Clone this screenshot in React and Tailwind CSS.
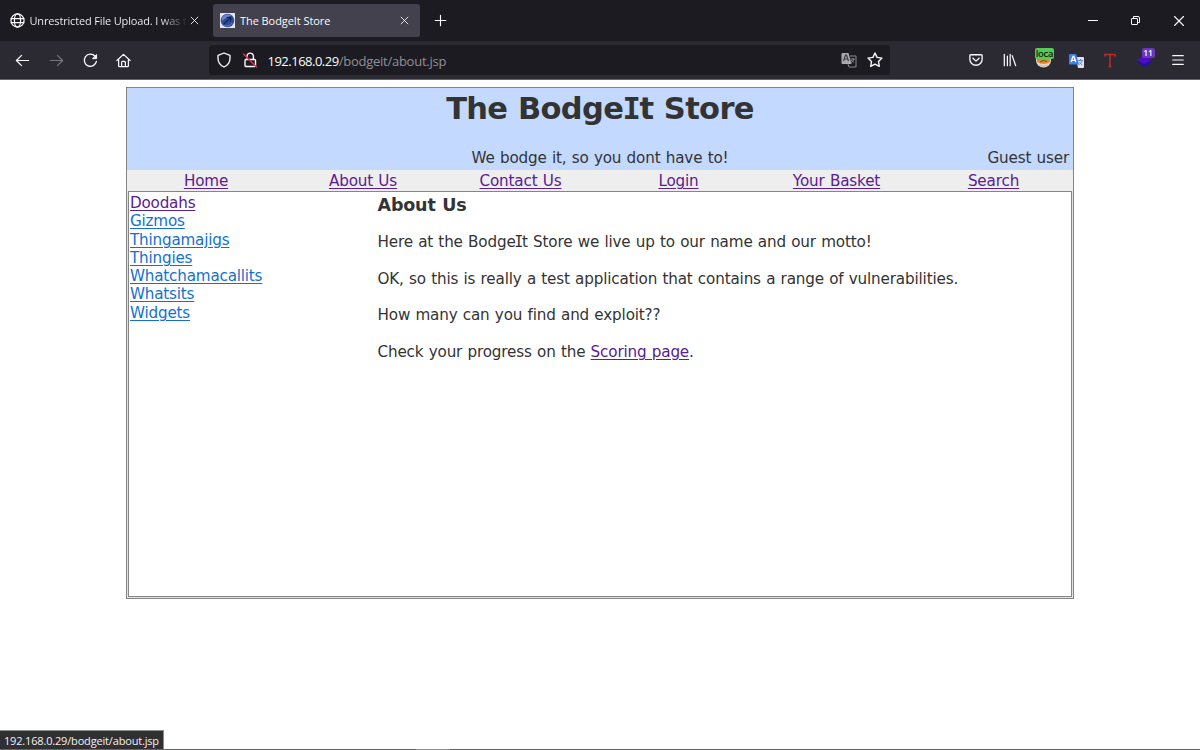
const navLinks = [
  { label: 'Home', width: 'w-[157px]' },
  { label: 'About Us', width: 'w-[157px]' },
  { label: 'Contact Us', width: 'w-[158px]' },
  { label: 'Login', width: 'w-[158px]' },
  { label: 'Your Basket', width: 'w-[158px]' },
  { label: 'Search', width: 'w-[156px]' },
];

const categories = [
  { label: 'Doodahs', visited: true },
  { label: 'Gizmos' },
  { label: 'Thingamajigs' },
  { label: 'Thingies' },
  { label: 'Whatchamacallits' },
  { label: 'Whatsits' },
  { label: 'Widgets' },
];

const iconProps = {
  viewBox: '0 0 16 16',
  fill: 'none',
  stroke: 'currentColor',
  strokeLinecap: 'round',
  strokeLinejoin: 'round',
};

function CloseIcon({ className }) {
  return (
    <svg {...iconProps} strokeWidth="1.5" className={className}>
      <path d="M2 2l12 12M14 2L2 14" />
    </svg>
  );
}

function GlobeIcon() {
  return (
    <svg {...iconProps} strokeWidth="1.3" className="size-[15px] shrink-0">
      <circle cx="8" cy="8" r="7" />
      <ellipse cx="8" cy="8" rx="3.3" ry="7" />
      <path d="M1.2 6h13.6M1.2 10.3h13.6" />
    </svg>
  );
}

function StoreFavicon() {
  return (
    <svg viewBox="0 0 15 15" className="size-[15px] shrink-0">
      <path fill="#e4e6ea" d="M0 0h15v15H0z" />
      <circle cx="7.5" cy="7.5" r="6.8" fill="#314c9c" />
      <path d="M2 5a6 6 0 0 1 10-1.5C8 3.5 5 5 2 8z" fill="#7089c4" />
      <path d="M3.5 11.5L11 4M6.5 4.5L11 4l-.5 4.500" stroke="#142457" strokeWidth="1.2" fill="none" />
      <path d="M3 12c3 1.500 7 1 9-2" stroke="#5978c9" fill="none" />
    </svg>
  );
}

function TabStrip() {
  return (
    <div className="flex h-[41px] items-center bg-[#1c1b21] text-[#fbfbfe]">
      <div className="flex w-[213px] items-center pl-[10px]">
        <GlobeIcon />
        <span className="mt-[2px] ml-[4.5px] w-[159.5px] bg-linear-to-r from-[#fbfbfe] from-82% to-transparent to-99% bg-clip-text text-[11px] tracking-[-0.16px] whitespace-nowrap text-transparent">
          Unrestricted File Upload. I was t
        </span>
        <CloseIcon className="ml-[1px] size-[9px] shrink-0" />
      </div>
      <div className="flex h-[33px] w-[207px] items-center rounded-[3px] bg-[#42414d] pl-[7px]">
        <StoreFavicon />
        <span className="mt-[2px] ml-[5px] w-[160px] text-[11px] tracking-[-0.07px] whitespace-nowrap">The BodgeIt Store</span>
        <CloseIcon className="size-[9px]" />
      </div>
      <svg {...iconProps} strokeWidth="1.4" className="ml-[14px] size-[13px]">
        <path d="M8 1.5v13M1.5 8h13" />
      </svg>
      <div className="ml-auto flex items-center pr-[15.5px]">
        <svg viewBox="0 0 10 10" stroke="currentColor" className="mr-[32px] size-[10px]">
          <path d="M0 4.5h10" />
        </svg>
        <svg viewBox="0 0 11 11" fill="none" stroke="currentColor" className="mr-[32px] size-[11px]">
          <rect x="1.5" y="3.5" width="6" height="6" rx=".5" />
          <path d="M3.5 3.5v-2H8q1.5 0 1.5 1.5v4.5h-2" />
        </svg>
        <CloseIcon className="size-[12px]" />
      </div>
    </div>
  );
}

function AddressBar() {
  return (
    <div className="flex h-[30px] w-[681px] items-center rounded-[3px] bg-[#1c1b21] pl-[7px] text-[#fbfbfe]">
      <svg {...iconProps} strokeWidth="1.3" className="size-[16px]">
        <path d="M8 1l6 2.3v3.2c0 3.8-2.3 6.8-6 8.5-3.7-1.7-6-4.7-6-8.5V3.3z" />
      </svg>
      <svg {...iconProps} strokeWidth="1.4" className="ml-[10px] size-[16px]">
        <rect x="3" y="7.5" width="10.5" height="7" rx="1" />
        <path d="M5 7V4.3a3.2 3.2 0 0 1 6.400 0V7" />
        <path d="M1.5 2l13 13" stroke="#e22850" strokeWidth="1.5" />
      </svg>
      <span className="mt-[2px] ml-[9.5px] text-[13px] leading-none tracking-[-0.5px] whitespace-nowrap">
        192.168.0.29<span className="tracking-[-0.25px] text-[#8f8f98]">/bodgeit/about.jsp</span>
      </span>
      <svg viewBox="0 0 16 16" className="ml-auto size-[16px]">
        <path fill="#aaaaae" d="M1.5 1h6l3 11h-9q-1 0-1-1V2q0-1 1-1z" />
        <path d="M2.5 9l2-6h1l2 6M3.3 7H7" stroke="#3d3d43" strokeWidth="1.2" fill="none" />
        <path d="M9 4h6v11H8l-1-3M9.5 7H14M12 6v1M13 7c-.5 2-2 3-3 3.500M10 8l3 2.500" stroke="#88888e" fill="none" />
      </svg>
      <svg {...iconProps} strokeWidth="1.4" className="mr-[7px] ml-[10px] size-[16px]">
        <path d="M8 1l2.100 4.400 4.900.7-3.500 3.400.8 4.900L8 12.100l-4.300 2.300.8-4.900L1 6.100l4.900-.7z" />
      </svg>
    </div>
  );
}

function Extensions() {
  return (
    <div className="ml-auto flex items-center pr-[15.5px]">
      <svg {...iconProps} strokeWidth="1.5" className="mr-[20px] size-[14px]">
        <path d="M2 2h12q1 0 1 1v4c0 4-3 7-7 7S1 11 1 7V3q0-1 1-1z" />
        <path d="M4.500 6L8 9.300 11.500 6" />
      </svg>
      <svg {...iconProps} strokeWidth="1.4" className="mr-[18.5px] size-[14px]">
        <path d="M1.500 1.500v13M5 3.500v11M8.200 1.500v13M10.500 3l4 11.500" />
      </svg>
      <div className="relative mr-[15px] size-[19px]">
        <svg viewBox="0 0 19 19" className="size-[19px]">
          <ellipse cx="8.500" cy="9.500" rx="7.500" ry="7" fill="#dedbd3" />
          <path d="M2 7.500h13v3.500q-6 4-13 0z" fill="#e8892c" />
          <path d="M5 11l3-1.500 4 1" stroke="#6b4930" fill="none" />
          <path d="M4 14q4.500 2.500 9 0" stroke="#f3b36e" fill="none" />
        </svg>
        <span className="absolute -top-[3px] left-0 h-[11px] w-[19px] rounded-[2px] bg-[#59c856] text-center text-[9.5px] leading-[11px] font-semibold tracking-[-0.3px] text-[#122512]">
          loca
        </span>
      </div>
      <svg viewBox="0 0 15 15" className="mr-[19px] size-[15px]">
        <path d="M7 4h7q1 0 1 1v9q0 1-1 1H9z" fill="#dde2eb" />
        <path d="M9 7.500h5M11.500 6v1.500M13 8c-.5 2-2 3-3 3.500M10.500 9l2.500 3" stroke="#668bc2" fill="none" />
        <path d="M1 1h6l3 10.500H1q-1 0-1-1V2q0-1 1-1z" fill="#3c82ee" />
        <path d="M2 9l2-5.500h.8l2 5.500M3 7.300h3.200" stroke="#fff" strokeWidth="1.3" fill="none" />
      </svg>
      <svg viewBox="0 0 14 16" className="mr-[18.5px] h-4 w-[14px]" fill="none">
        <path d="M2 4.500V2.500h10v2M7 2.500v12M5.500 14.500h3" stroke="#bd2c24" strokeWidth="1.5" />
      </svg>
      <div className="relative mr-[17px] size-[18px]">
        <svg viewBox="0 0 18 18" className="size-[18px]">
          <path d="M1 11l7.500-4L16 11l-7.500 5.500z" fill="#25109a" />
          <path d="M1 8.500L8.500 4 16 8.500l-7.500 5z" fill="#4d0bc4" />
        </svg>
        <span className="absolute -top-[3px] left-[6px] h-[10px] w-[13px] rounded-[2px] bg-[#6738b7] text-center text-[8.5px] leading-[10px] font-semibold">
          11
        </span>
      </div>
      <svg {...iconProps} strokeWidth="1.4" className="size-[14px]">
        <path d="M2 3h12M2 8h12M2 13h12" />
      </svg>
    </div>
  );
}

function Toolbar() {
  return (
    <div className="flex h-[39px] items-center border-b border-[#65646b] bg-[#2b2a33] text-[#fbfbfe]">
      <div className="flex w-[209px] items-center pl-[15px]">
        <svg {...iconProps} strokeWidth="1.3" className="size-[15px]">
          <path d="M14.500 8H1.500M7 2.500L1.500 8 7 13.500" />
        </svg>
        <svg {...iconProps} strokeWidth="1.3" className="ml-[19px] size-[15px] text-[#77767d]">
          <path d="M1.500 8h13M9 2.500L14.500 8 9 13.500" />
        </svg>
        <svg {...iconProps} strokeWidth="1.4" className="ml-[19px] size-[15px]">
          <path d="M12.800 3.500A6.500 6.500 0 1 0 14.300 9" />
          <path d="M14.500 2v4h-4z" fill="currentColor" strokeWidth="1" />
        </svg>
        <svg {...iconProps} strokeWidth="1.3" className="ml-[18px] size-[15px]">
          <path d="M1 8l7-6.500L15 8M2.800 7v6.500q0 1 1 1h8.400q1 0 1-1V7M6 14.500V10q0-1 1-1h2q1 0 1 1v4.500" />
        </svg>
      </div>
      <AddressBar />
      <Extensions />
    </div>
  );
}

function PageLink({ visited, children }) {
  return (
    <a
      className={
        visited
          ? 'text-[#582092] underline decoration-1 underline-offset-2'
          : 'text-[#1470cf] underline decoration-1 underline-offset-2'
      }
    >
      {children}
    </a>
  );
}

// The store's name is set with a slab capital I
function StorePage() {
  return (
    <main className="mx-auto mt-[7px] flex h-[512px] w-[948px] flex-col border border-[#858585] bg-[#e3e3e3] font-['DejaVu_Sans',sans-serif] text-[15.2px] tracking-[-0.16px] text-[#333333] [word-spacing:0.6px]">
      <header className="flex h-[82px] flex-col bg-[#c3d9ff]">
        <h1 className="pt-[2px] text-center text-[30.5px] leading-[38px] font-bold tracking-[-0.65px]">
          The Bodge<span className="-mx-[0.8px] font-['DejaVu_Sans_Mono',monospace]">I</span>t Store
        </h1>
        <div className="mt-auto grid grid-cols-[1fr_auto_1fr] leading-[24px]">
          <span className="col-start-2">We bodge it, so you dont have to!</span>
          <span className="pr-[4px] text-right">Guest user</span>
        </div>
      </header>
      <nav className="flex h-[21px] shrink-0 bg-[#eeeeee] pl-[0.5px] leading-[23px]">
        {navLinks.map((item) => (
          <div key={item.label} className={`${item.width} text-center`}>
            <PageLink visited>{item.label}</PageLink>
          </div>
        ))}
      </nav>
      <div className="mx-px mb-px flex flex-1 border border-[#858585] bg-white">
        <ul className="w-[248.5px] pt-[2px] pl-px leading-[18.3px] tracking-[-0.2px]">
          {categories.map((item) => (
            <li key={item.label}>
              <PageLink visited={item.visited}>{item.label}</PageLink>
            </li>
          ))}
        </ul>
        <section className="pt-[2px] leading-[18.5px]">
          <h3 className="mb-[17px] text-[17.5px] leading-[22px] font-bold">About Us</h3>
          <p className="mb-[18px]">
            Here at the Bodge<span className="-mx-[1.3px] font-['DejaVu_Sans_Mono',monospace]">I</span>t Store we live up to our name and our motto!
          </p>
          <p className="mb-[18px]">OK, so this is really a test application that contains a range of vulnerabilities.</p>
          <p className="mb-[18px]">How many can you find and exploit??</p>
          <p>
            Check your progress on the <PageLink visited>Scoring page</PageLink>.
          </p>
        </section>
      </div>
    </main>
  );
}

export default function App() {
  return (
    <div className="flex h-[750px] w-[1200px] flex-col overflow-hidden bg-white font-['Open_Sans','Noto_Sans',sans-serif]">
      <TabStrip />
      <Toolbar />
      <StorePage />
      <footer className="mt-auto">
        <div className="h-[19px] w-[164px] border-t border-r border-[#8b918c] bg-[#303033] pl-[4px] text-[11px] leading-[20px] tracking-[-0.17px] whitespace-nowrap text-[#f2f2f4]">
          192.168.0.29/bodgeit/about.jsp
        </div>
        <div className="flex h-px bg-[#656565]">
          <div className="ml-[416px] w-[34px] bg-[#8d8d8d]" />
        </div>
      </footer>
    </div>
  );
}
